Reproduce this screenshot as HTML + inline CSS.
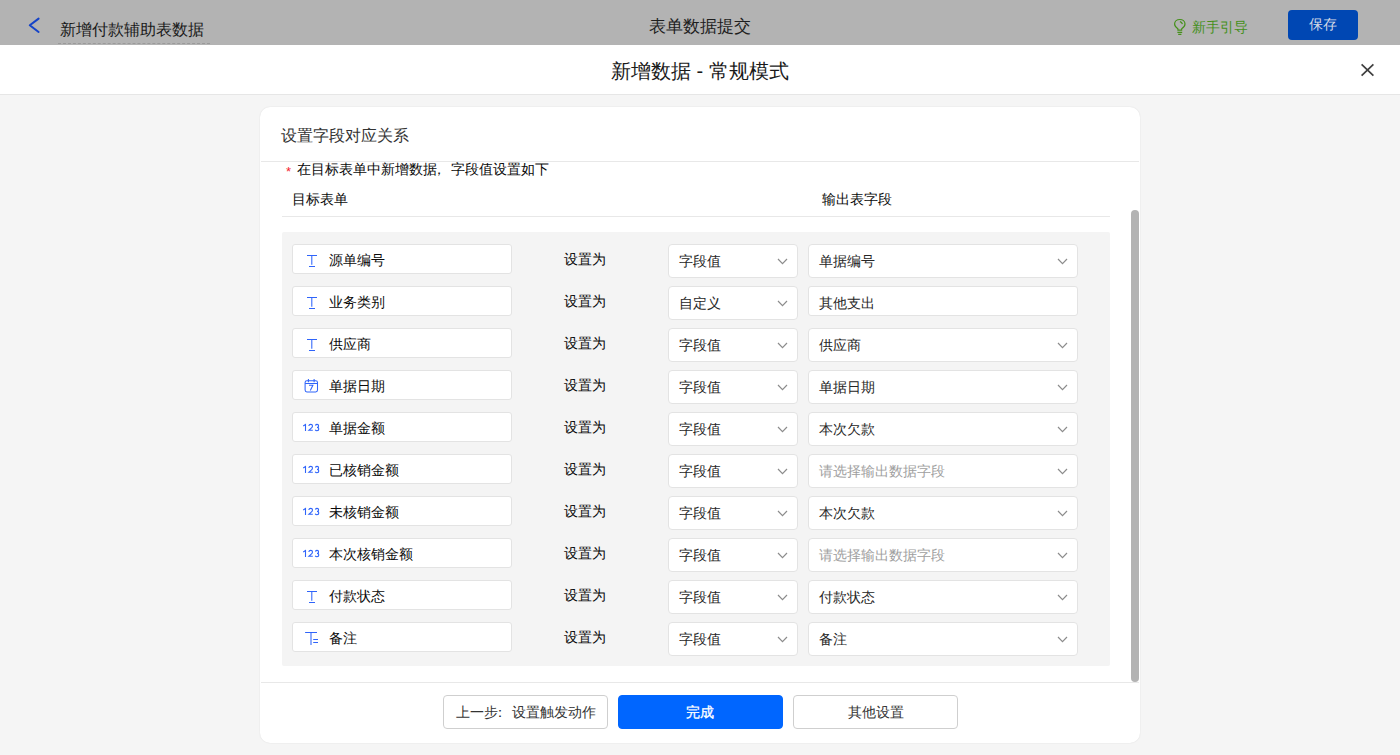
<!DOCTYPE html>
<html><head><meta charset="utf-8">
<style>
*{box-sizing:border-box;margin:0;padding:0}
html,body{width:1400px;height:755px;overflow:hidden}
body{position:relative;background:#f5f5f5;font-family:"Liberation Sans",sans-serif;color:#1f1f1f;font-size:14px}
.abs{position:absolute}
.t{position:absolute;white-space:nowrap;line-height:1}
#top{left:0;top:0;width:1400px;height:45px;background:#b3b3b3}
#mh{left:0;top:45px;width:1400px;height:50px;background:#fff;border-bottom:1px solid #e6e6e6}
#card{left:260px;top:107px;width:880px;height:636px;background:#fff;border-radius:10px;overflow:hidden;box-shadow:0 0 1.5px rgba(0,0,0,0.12)}
.line{position:absolute;height:1px;background:#e8e8e8}
.fld{position:absolute;left:32px;width:220px;height:30px;background:#fff;border:1px solid #e3e3e3;border-radius:3px}
.sel{position:absolute;height:34px;background:#fff;border:1px solid #e3e3e3;border-radius:4px}
.ic{position:absolute;left:-1px;top:-1px}
.num{left:10px;top:9px;font-size:9.5px;color:#2b62f6;letter-spacing:0.8px}
.ft{left:36px;top:8px;font-size:14px;color:#0a0a0a}
.sw{left:304px;font-size:14px;color:#0a0a0a}
.s1{left:408px;width:130px}
.s2{left:548px;width:270px}
.st{left:10px;top:9px;font-size:14px;color:#262626}
.ph{color:#a0a0a0}
.chev{position:absolute;right:8px;top:11.5px}
.btn{position:absolute;top:588px;width:165px;height:34px;border-radius:4px;border:1px solid #cfcfcf;background:#fff;text-align:center;font-size:14px;line-height:32px;color:#333}
</style></head><body>
<div id="top" class="abs">
  <svg class="abs" style="left:28px;top:17px" width="13" height="17" viewBox="0 0 13 17"><path d="M10.6 1.6 L1.8 8.3 L10.6 15.0" fill="none" stroke="#1543c8" stroke-width="2" stroke-linecap="round" stroke-linejoin="round"/></svg>
  <div class="t" style="left:60px;top:22px;font-size:16px;color:#1a1a1a">新增付款辅助表数据</div>
  <div class="abs" style="left:58px;top:43px;width:152px;height:0;border-top:1px dashed #9a9a9a"></div>
  <div class="t" style="left:649px;top:18px;font-size:17px;color:#1f1f1f">表单数据提交</div>
  <svg class="abs" style="left:1173px;top:18px" width="14" height="18" viewBox="0 0 14 18"><path d="M4.9 12.2V10.7C2.9 9.5 1.6 8 1.6 6.1C1.6 3.3 3.9 1.5 6.8 1.5C9.7 1.5 12 3.3 12 6.1C12 8 10.7 9.5 8.7 10.7V12.2Z" fill="none" stroke="#45901a" stroke-width="1.2" stroke-linejoin="round"/><path d="M4.4 14.3H9.2M5.2 16.3H8.4M6.9 3.6C8.1 3.9 9.1 4.8 9.4 6.2" fill="none" stroke="#45901a" stroke-width="1.2"/></svg>
  <div class="t" style="left:1192px;top:20px;font-size:14px;color:#45901a">新手引导</div>
  <div class="abs" style="left:1288px;top:10px;width:70px;height:30px;background:#0047b3;border-radius:4px"></div>
  <div class="t" style="left:1309px;top:17px;font-size:14px;color:#d5dae6">保存</div>
</div>
<div id="mh" class="abs">
  <div class="t" style="left:611px;top:16px;font-size:20px;color:#1a1a1a">新增数据 - 常规模式</div>
  <svg class="abs" style="left:1360px;top:18px" width="15" height="14" viewBox="0 0 15 14"><path d="M1.6 1.3 L13.4 12.7 M13.4 1.3 L1.6 12.7" stroke="#404040" stroke-width="1.7"/></svg>
</div>
<div id="card" class="abs">
  <div class="t" style="left:21px;top:21px;font-size:16px;color:#333">设置字段对应关系</div>
  <div class="line" style="left:1px;top:54px;width:878px"></div>
  <div class="t" style="left:26px;top:58px;font-size:13px;color:#f5222d">*</div>
  <div class="t" style="left:37px;top:55px;font-size:14px;color:#0a0a0a">在目标表单中新增数据<span style="margin-left:-5px;margin-right:5px">，</span>字段值设置如下</div>
  <div class="t" style="left:32px;top:85px;font-size:14px;color:#0a0a0a">目标表单</div>
  <div class="t" style="left:562px;top:85px;font-size:14px;color:#0a0a0a">输出表字段</div>
  <div class="line" style="left:22px;top:109px;width:828px"></div>
  <div class="abs" style="left:22px;top:125px;width:828px;height:434px;background:#f4f4f4;border-radius:2px"></div>
  <div id="rows"><div class="fld" style="top:137px"><svg class="ic" width="40" height="30" viewBox="0 0 40 30"><path d="M15 11.5H25M19.8 11.5V20.8M17 22.5H23" fill="none" stroke="#2f64fa" stroke-width="1.05"/></svg><div class="t ft">源单编号</div></div>
<div class="t sw" style="top:145px">设置为</div>
<div class="sel s1" style="top:137px"><div class="t st">字段值</div><svg class="chev" width="13" height="9" viewBox="0 0 13 9"><path d="M2 2L6.5 6.6L11 2" fill="none" stroke="#8c8c8c" stroke-width="1.2"/></svg></div>
<div class="sel s2" style="top:137px"><div class="t st">单据编号</div><svg class="chev" width="13" height="9" viewBox="0 0 13 9"><path d="M2 2L6.5 6.6L11 2" fill="none" stroke="#8c8c8c" stroke-width="1.2"/></svg></div>
<div class="fld" style="top:179px"><svg class="ic" width="40" height="30" viewBox="0 0 40 30"><path d="M15 11.5H25M19.8 11.5V20.8M17 22.5H23" fill="none" stroke="#2f64fa" stroke-width="1.05"/></svg><div class="t ft">业务类别</div></div>
<div class="t sw" style="top:187px">设置为</div>
<div class="sel s1" style="top:179px"><div class="t st">自定义</div><svg class="chev" width="13" height="9" viewBox="0 0 13 9"><path d="M2 2L6.5 6.6L11 2" fill="none" stroke="#8c8c8c" stroke-width="1.2"/></svg></div>
<div class="sel s2" style="top:179px;height:30px;border-radius:3px"><div class="t st">其他支出</div></div>
<div class="fld" style="top:221px"><svg class="ic" width="40" height="30" viewBox="0 0 40 30"><path d="M15 11.5H25M19.8 11.5V20.8M17 22.5H23" fill="none" stroke="#2f64fa" stroke-width="1.05"/></svg><div class="t ft">供应商</div></div>
<div class="t sw" style="top:229px">设置为</div>
<div class="sel s1" style="top:221px"><div class="t st">字段值</div><svg class="chev" width="13" height="9" viewBox="0 0 13 9"><path d="M2 2L6.5 6.6L11 2" fill="none" stroke="#8c8c8c" stroke-width="1.2"/></svg></div>
<div class="sel s2" style="top:221px"><div class="t st">供应商</div><svg class="chev" width="13" height="9" viewBox="0 0 13 9"><path d="M2 2L6.5 6.6L11 2" fill="none" stroke="#8c8c8c" stroke-width="1.2"/></svg></div>
<div class="fld" style="top:263px"><svg class="ic" width="40" height="30" viewBox="0 0 40 30"><rect x="13.1" y="10.7" width="12.4" height="11.2" rx="1.8" fill="none" stroke="#2f64fa" stroke-width="1.05"/><path d="M13.1 13.4H25.5M16.4 9.1V12.3M22.1 9.1V12.3M17 15.3H20.9L18.3 20.5" fill="none" stroke="#2f64fa" stroke-width="1.05"/></svg><div class="t ft">单据日期</div></div>
<div class="t sw" style="top:271px">设置为</div>
<div class="sel s1" style="top:263px"><div class="t st">字段值</div><svg class="chev" width="13" height="9" viewBox="0 0 13 9"><path d="M2 2L6.5 6.6L11 2" fill="none" stroke="#8c8c8c" stroke-width="1.2"/></svg></div>
<div class="sel s2" style="top:263px"><div class="t st">单据日期</div><svg class="chev" width="13" height="9" viewBox="0 0 13 9"><path d="M2 2L6.5 6.6L11 2" fill="none" stroke="#8c8c8c" stroke-width="1.2"/></svg></div>
<div class="fld" style="top:305px"><svg class="ic" width="40" height="30" viewBox="0 0 40 30"><path d="M11.2 14L13.5 12.5V18.9M16.8 14C17 12.9 17.7 12.4 18.7 12.4C19.8 12.4 20.5 13.1 20.5 14.1C20.5 15.1 19.9 15.7 19 16.4L16.9 18.3H20.8M23.4 13.5C23.7 12.8 24.3 12.4 25.1 12.4C26.1 12.4 26.6 13 26.6 13.9C26.6 14.8 26 15.4 25 15.4C26.1 15.4 26.8 16 26.8 17.1C26.8 18.2 26 18.8 25 18.8C24.1 18.8 23.5 18.4 23.2 17.7" fill="none" stroke="#2f64fa" stroke-width="1.1"/></svg><div class="t ft">单据金额</div></div>
<div class="t sw" style="top:313px">设置为</div>
<div class="sel s1" style="top:305px"><div class="t st">字段值</div><svg class="chev" width="13" height="9" viewBox="0 0 13 9"><path d="M2 2L6.5 6.6L11 2" fill="none" stroke="#8c8c8c" stroke-width="1.2"/></svg></div>
<div class="sel s2" style="top:305px"><div class="t st">本次欠款</div><svg class="chev" width="13" height="9" viewBox="0 0 13 9"><path d="M2 2L6.5 6.6L11 2" fill="none" stroke="#8c8c8c" stroke-width="1.2"/></svg></div>
<div class="fld" style="top:347px"><svg class="ic" width="40" height="30" viewBox="0 0 40 30"><path d="M11.2 14L13.5 12.5V18.9M16.8 14C17 12.9 17.7 12.4 18.7 12.4C19.8 12.4 20.5 13.1 20.5 14.1C20.5 15.1 19.9 15.7 19 16.4L16.9 18.3H20.8M23.4 13.5C23.7 12.8 24.3 12.4 25.1 12.4C26.1 12.4 26.6 13 26.6 13.9C26.6 14.8 26 15.4 25 15.4C26.1 15.4 26.8 16 26.8 17.1C26.8 18.2 26 18.8 25 18.8C24.1 18.8 23.5 18.4 23.2 17.7" fill="none" stroke="#2f64fa" stroke-width="1.1"/></svg><div class="t ft">已核销金额</div></div>
<div class="t sw" style="top:355px">设置为</div>
<div class="sel s1" style="top:347px"><div class="t st">字段值</div><svg class="chev" width="13" height="9" viewBox="0 0 13 9"><path d="M2 2L6.5 6.6L11 2" fill="none" stroke="#8c8c8c" stroke-width="1.2"/></svg></div>
<div class="sel s2" style="top:347px"><div class="t st ph">请选择输出数据字段</div><svg class="chev" width="13" height="9" viewBox="0 0 13 9"><path d="M2 2L6.5 6.6L11 2" fill="none" stroke="#8c8c8c" stroke-width="1.2"/></svg></div>
<div class="fld" style="top:389px"><svg class="ic" width="40" height="30" viewBox="0 0 40 30"><path d="M11.2 14L13.5 12.5V18.9M16.8 14C17 12.9 17.7 12.4 18.7 12.4C19.8 12.4 20.5 13.1 20.5 14.1C20.5 15.1 19.9 15.7 19 16.4L16.9 18.3H20.8M23.4 13.5C23.7 12.8 24.3 12.4 25.1 12.4C26.1 12.4 26.6 13 26.6 13.9C26.6 14.8 26 15.4 25 15.4C26.1 15.4 26.8 16 26.8 17.1C26.8 18.2 26 18.8 25 18.8C24.1 18.8 23.5 18.4 23.2 17.7" fill="none" stroke="#2f64fa" stroke-width="1.1"/></svg><div class="t ft">未核销金额</div></div>
<div class="t sw" style="top:397px">设置为</div>
<div class="sel s1" style="top:389px"><div class="t st">字段值</div><svg class="chev" width="13" height="9" viewBox="0 0 13 9"><path d="M2 2L6.5 6.6L11 2" fill="none" stroke="#8c8c8c" stroke-width="1.2"/></svg></div>
<div class="sel s2" style="top:389px"><div class="t st">本次欠款</div><svg class="chev" width="13" height="9" viewBox="0 0 13 9"><path d="M2 2L6.5 6.6L11 2" fill="none" stroke="#8c8c8c" stroke-width="1.2"/></svg></div>
<div class="fld" style="top:431px"><svg class="ic" width="40" height="30" viewBox="0 0 40 30"><path d="M11.2 14L13.5 12.5V18.9M16.8 14C17 12.9 17.7 12.4 18.7 12.4C19.8 12.4 20.5 13.1 20.5 14.1C20.5 15.1 19.9 15.7 19 16.4L16.9 18.3H20.8M23.4 13.5C23.7 12.8 24.3 12.4 25.1 12.4C26.1 12.4 26.6 13 26.6 13.9C26.6 14.8 26 15.4 25 15.4C26.1 15.4 26.8 16 26.8 17.1C26.8 18.2 26 18.8 25 18.8C24.1 18.8 23.5 18.4 23.2 17.7" fill="none" stroke="#2f64fa" stroke-width="1.1"/></svg><div class="t ft">本次核销金额</div></div>
<div class="t sw" style="top:439px">设置为</div>
<div class="sel s1" style="top:431px"><div class="t st">字段值</div><svg class="chev" width="13" height="9" viewBox="0 0 13 9"><path d="M2 2L6.5 6.6L11 2" fill="none" stroke="#8c8c8c" stroke-width="1.2"/></svg></div>
<div class="sel s2" style="top:431px"><div class="t st ph">请选择输出数据字段</div><svg class="chev" width="13" height="9" viewBox="0 0 13 9"><path d="M2 2L6.5 6.6L11 2" fill="none" stroke="#8c8c8c" stroke-width="1.2"/></svg></div>
<div class="fld" style="top:473px"><svg class="ic" width="40" height="30" viewBox="0 0 40 30"><path d="M15 11.5H25M19.8 11.5V20.8M17 22.5H23" fill="none" stroke="#2f64fa" stroke-width="1.05"/></svg><div class="t ft">付款状态</div></div>
<div class="t sw" style="top:481px">设置为</div>
<div class="sel s1" style="top:473px"><div class="t st">字段值</div><svg class="chev" width="13" height="9" viewBox="0 0 13 9"><path d="M2 2L6.5 6.6L11 2" fill="none" stroke="#8c8c8c" stroke-width="1.2"/></svg></div>
<div class="sel s2" style="top:473px"><div class="t st">付款状态</div><svg class="chev" width="13" height="9" viewBox="0 0 13 9"><path d="M2 2L6.5 6.6L11 2" fill="none" stroke="#8c8c8c" stroke-width="1.2"/></svg></div>
<div class="fld" style="top:515px"><svg class="ic" width="40" height="30" viewBox="0 0 40 30"><path d="M13.1 10.5H25M19 10.5V22.9M21.2 17.5H26M21.2 20.5H26" fill="none" stroke="#2f64fa" stroke-width="1.05"/></svg><div class="t ft">备注</div></div>
<div class="t sw" style="top:523px">设置为</div>
<div class="sel s1" style="top:515px"><div class="t st">字段值</div><svg class="chev" width="13" height="9" viewBox="0 0 13 9"><path d="M2 2L6.5 6.6L11 2" fill="none" stroke="#8c8c8c" stroke-width="1.2"/></svg></div>
<div class="sel s2" style="top:515px"><div class="t st">备注</div><svg class="chev" width="13" height="9" viewBox="0 0 13 9"><path d="M2 2L6.5 6.6L11 2" fill="none" stroke="#8c8c8c" stroke-width="1.2"/></svg></div></div><!--/rows-->
  <div class="abs" style="left:871px;top:103px;width:8px;height:472px;background:#b3b3b3;border-radius:4px"></div>
  <div class="line" style="left:1px;top:575px;width:878px"></div>
  <div class="btn" style="left:183px">上一步<span style="margin-left:-5px;margin-right:5px">：</span>设置触发动作</div>
  <div class="btn" style="left:358px;background:#0066ff;border-color:#0066ff;color:#fff;-webkit-text-stroke:0.3px #fff;padding-right:2px">完成</div>
  <div class="btn" style="left:533px">其他设置</div>
</div>
</body></html>
